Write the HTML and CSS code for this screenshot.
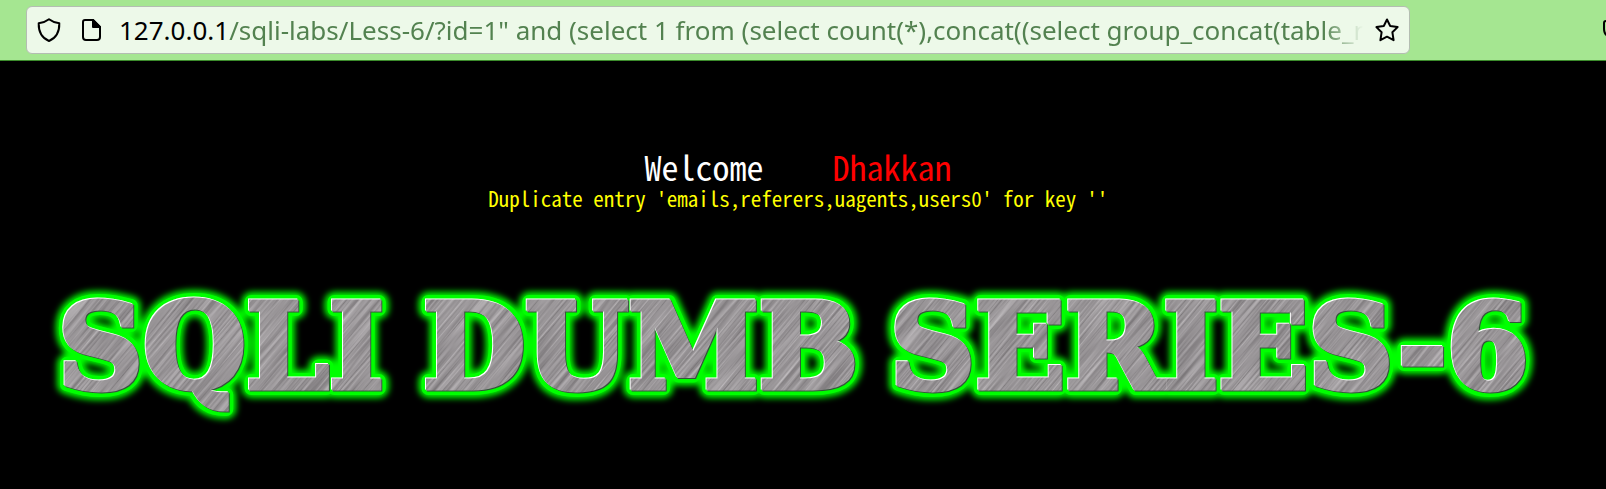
FILE: index.html
```html
<!DOCTYPE html>
<html lang="en">
<head>
<meta charset="utf-8">
<title>Less-6</title>
<link rel="stylesheet" href="styles.css">
</head>
<body>
<header class="toolbar">
  <form class="address">
    <button class="icon-button" type="button" aria-label="Tracking protection">
      <svg class="icon" viewBox="0 0 24 26"><path d="M12 2.2 C9 4.5 5.5 5.8 1.7 6.2 C1.5 14 4 20.500 12 24 C20 20.500 22.500 14 22.300 6.200 C18.500 5.800 15 4.500 12 2.200Z"/></svg>
    </button>
    <button class="icon-button" type="button" aria-label="Site information">
      <svg class="icon" viewBox="0 0 24 26"><path d="M6 3h8l7 7v10a3 3 0 0 1-3 3H7a3 3 0 0 1-3-3V5a2 2 0 0 1 2-2z"/><path class="solid" d="M14 3v7h7z"/></svg>
    </button>
    <label class="host" for="url">127.0.0.1</label>
    <input class="path" id="url" type="text" spellcheck="false" value="/sqli-labs/Less-6/?id=1&quot; and (select 1 from (select count(*),concat((select group_concat(table_name)">
    <button class="icon-button" type="button" aria-label="Bookmark">
      <svg class="icon" viewBox="0 0 24 26"><path d="M12 2.500 L15.200 9 L22.600 10.100 L17.400 15.300 L18.600 23.200 L12 19.700 L5.400 23.200 L6.600 15.300 L1.400 10.100 L8.800 9Z"/></svg>
    </button>
  </form>
  <button class="pocket" type="button" aria-label="Save">
    <svg class="icon" viewBox="0 0 24 26"><path d="M4 4h16a2 2 0 0 1 2 2v6c0 12-20 12-20 0V6a2 2 0 0 1 2-2z"/></svg>
  </button>
</header>
<main class="page">
  <h1 class="welcome">Welcome <span class="name">Dhakkan</span></h1>
  <p class="error">Duplicate entry 'emails,referers,uagents,users0' for key ''</p>
  <svg class="banner" viewBox="0 0 1606 160" role="img" aria-label="SQLI DUMB SERIES-6">
    <defs>
      <g id="words"><text x="58" y="117">SQLI</text><text x="423" y="117">DUMB</text><text x="890" y="117">SERIES-6</text></g>
      <mask id="face" maskUnits="userSpaceOnUse" x="0" y="0" width="1606" height="160"><use href="#words" class="cut"/></mask>
      <filter id="glow" x="-5%" y="-30%" width="110%" height="160%"><feGaussianBlur stdDeviation="3"/></filter>
      <filter id="brush" x="0" y="0" width="100%" height="100%" color-interpolation-filters="sRGB">
        <feTurbulence type="fractalNoise" baseFrequency="0.012 0.5" numOctaves="2" seed="6"/>
        <feColorMatrix values="0.4 0 0 0 0.4  0.4 0 0 0 0.385  0.4 0 0 0 0.395  0 0 0 0 1"/>
      </filter>
    </defs>
    <use href="#words" class="glow" filter="url(#glow)"/>
    <use href="#words" class="edge"/>
    <use href="#words" class="shade" x="1" y="1"/>
    <use href="#words" class="shine" x="-1" y="-1"/>
    <g mask="url(#face)"><rect x="-200" y="-700" width="2000" height="2000" transform="rotate(-50 803 80)" filter="url(#brush)"/></g>
  </svg>
</main>
</body>
</html>
```
FILE: styles.css
```css
* { box-sizing: border-box; }
body { margin: 0; min-height: 100vh; background: #000; overflow-x: hidden; }
button { padding: 0; border: 0; background: none; }
.toolbar { display: flex; align-items: center; justify-content: space-between; height: 61px; padding-left: 26px; background: #a5e691; border-bottom: 1px solid #3c8c2c; overflow: hidden; }
.address { display: flex; align-items: center; flex: 0 0 87.6%; height: 48px; padding: 0 10px; border: 1px solid #b4bdb2; border-radius: 6px; background: #edf9e9; font: 26px/36px "Noto Sans", sans-serif; }
.icon-button { flex: none; display: flex; width: 24px; margin-right: 18px; }
.icon-button + .host { margin-left: -2px; }
.icon-button:last-child { margin: 0 0 0 12px; }
.icon { display: block; width: 24px; height: 26px; fill: none; stroke: #000; stroke-width: 2; stroke-linejoin: round; }
.solid { fill: #000; }
.host { color: #000; }
.path { flex: 1; min-width: 0; padding: 0; border: 0; outline: 0; background: none; font: inherit; color: #538250; -webkit-mask-image: linear-gradient(to left, transparent, #000 40px); mask-image: linear-gradient(to left, transparent, #000 40px); }
.pocket { flex: none; margin-right: -20px; }
.page { padding-top: 86px; text-align: center; font-family: "Noto Sans Mono CJK SC", "Noto Sans CJK SC", monospace; font-feature-settings: "hwid"; }
.welcome { margin: 0; padding-right: 10px; font-size: 34px; font-weight: 300; line-height: 40px; color: #fff; }
.name { margin-left: 52px; color: #f00; }
.error { margin: 0; padding-right: 10px; font-size: 21px; font-weight: 300; line-height: 22px; color: #ff0; }
.banner { display: block; width: 100%; margin-top: 62px; font: bold 118px "DejaVu Serif", serif; font-feature-settings: normal; }
.glow { fill: #0f0; stroke: #0f0; stroke-width: 20px; stroke-linejoin: round; }
.edge { fill: #0f0; stroke: #0f0; stroke-width: 14px; stroke-linejoin: round; }
.cut { fill: #fff; stroke: #fff; stroke-width: 5px; }
.shade { fill: #34543a; stroke: #34543a; stroke-width: 5px; }
.shine { fill: #fff; stroke: #fff; stroke-width: 5px; }
```
